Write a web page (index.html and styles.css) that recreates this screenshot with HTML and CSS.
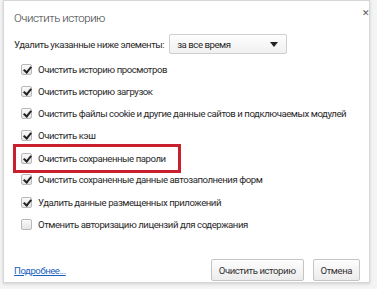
FILE: index.html
```html
<!DOCTYPE html>
<html lang="ru">
<head>
  <meta charset="UTF-8" />
  <title>Очистить историю</title>
  <link rel="stylesheet" href="styles.css">
</head>
<body>
  <div class="dialog">
    <div class="head">
      <h1>Очистить историю</h1>
      <span class="close">&#x2715;</span>
    </div>

    <div class="period">
      <span>Удалить указанные ниже элементы:</span>
      <div class="select">
        <span>за все время</span>
        <span class="arrow"></span>
      </div>
    </div>

    <ul class="items">
      <li><span class="box on"></span>Очистить историю просмотров</li>
      <li><span class="box on"></span>Очистить историю загрузок</li>
      <li><span class="box on"></span>Очистить файлы cookie и другие данные сайтов и подключаемых модулей</li>
      <li><span class="box on"></span>Очистить кэш</li>
      <li class="marked"><span class="box on"></span>Очистить сохраненные пароли</li>
      <li><span class="box on"></span>Очистить сохраненные данные автозаполнения форм</li>
      <li><span class="box on"></span>Удалить данные размещенных приложений</li>
      <li><span class="box"></span>Отменить авторизацию лицензий для содержания</li>
    </ul>

    <div class="foot">
      <a href="#">Подробнее...</a>
      <div class="buttons">
        <button>Очистить историю</button>
        <button>Отмена</button>
      </div>
    </div>
  </div>
</body>
</html>
```

FILE: styles.css
```css
body {
  margin: 0;
  padding: 0 7px 6px 3px;
  background: #f4f4f4;
  font-family: Roboto, sans-serif;
  font-size: 9.6px;
  letter-spacing: -0.45px;
  color: #2a2a2a;
}

.dialog {
  background: #fff;
  border: 1px solid #d6d6d6;
  box-shadow: 0 1px 3px rgba(0, 0, 0, 0.15);
  height: 283px;
  box-sizing: border-box;
  padding: 0 9px 0 10px;
}

.head {
  display: flex;
  justify-content: space-between;
  padding-top: 10px;
  height: 31px;
  box-sizing: border-box;
}

h1 {
  margin: 0;
  font-size: 11.5px;
  font-weight: 300;
  letter-spacing: -0.5px;
  color: #3a3a3a;
}

.close {
  font-family: 'DejaVu Sans', sans-serif;
  font-size: 9px;
  color: #555;
  margin-top: -3px;
  margin-right: -9px;
}

.period {
  display: flex;
  align-items: center;
  gap: 5px;
  height: 24px;
  white-space: nowrap;
}

.select {
  width: 118px;
  height: 20px;
  box-sizing: border-box;
  border: 1px solid #cfcfcf;
  border-radius: 2px;
  background: linear-gradient(#fefefe, #f0f0f0);
  display: flex;
  align-items: center;
  justify-content: space-between;
  padding: 0 8px 0 7px;
}

.arrow {
  border-left: 4px solid transparent;
  border-right: 4px solid transparent;
  border-top: 5px solid #222;
}

.items {
  list-style: none;
  margin: 2px 0 0;
  padding: 0;
}

.items li {
  display: flex;
  align-items: center;
  height: 22.2px;
  padding-left: 7px;
  white-space: nowrap;
}

.items li.marked {
  outline: 3px solid #c8202e;
  outline-offset: -3px;
  width: 168px;
  height: 29px;
  margin: -3px 0 -4px -1px;
  box-sizing: border-box;
  padding-left: 8px;
}

.box {
  flex-shrink: 0;
  width: 11px;
  height: 11px;
  border: 1px solid #b8b8b8;
  border-radius: 2px;
  background: linear-gradient(#fafafa, #e4e4e4);
  margin-right: 6px;
  position: relative;
  box-sizing: border-box;
}

.box.on::after {
  content: "";
  position: absolute;
  left: 3px;
  top: 0;
  width: 3px;
  height: 6px;
  border: solid #222;
  border-width: 0 2px 2px 0;
  transform: rotate(40deg);
}

.foot {
  display: flex;
  justify-content: space-between;
  align-items: center;
  margin-top: 24px;
}

.foot a {
  color: #1a5fbf;
}

.buttons {
  display: flex;
  gap: 9px;
}

button {
  font-family: inherit;
  font-size: 9.6px;
  letter-spacing: -0.45px;
  color: #333;
  height: 22px;
  padding: 0 7px;
  border: 1px solid #c4c4c4;
  border-radius: 2px;
  background: linear-gradient(#fdfdfd, #ececec);
}
```
